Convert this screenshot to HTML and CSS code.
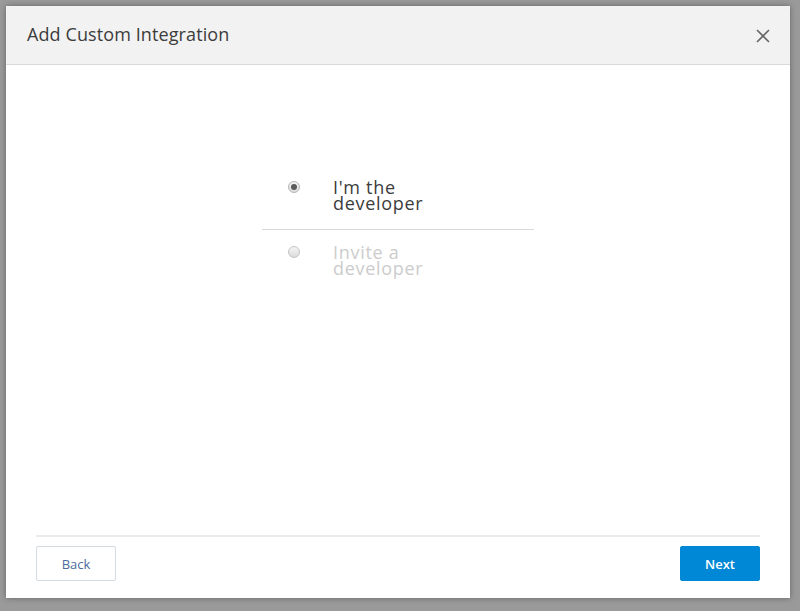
FILE: index.html
```html
<!DOCTYPE html>
<html>
<head>
<meta charset="utf-8">
<link rel="stylesheet" href="styles.css">
</head>
<body>
<div class="dialog">
  <div class="header">
    <div class="title">Add Custom Integration</div>
    <svg class="close" width="14" height="14" viewBox="0 0 14 14"><path d="M1 1L13 13M13 1L1 13" stroke="#666" stroke-width="1.6" fill="none"/></svg>
  </div>
  <div class="content">
    <div class="options">
      <div class="option selected">
        <span class="radio"><span class="dot"></span></span>
        <span class="label">I'm the developer</span>
      </div>
      <div class="option disabled">
        <span class="radio"></span>
        <span class="label">Invite a developer</span>
      </div>
    </div>
  </div>
  <div class="footer">
    <button class="btn back">Back</button>
    <button class="btn next">Next</button>
  </div>
</div>
</body>
</html>
```
FILE: styles.css
```css
html, body { margin: 0; height: 100%; }
body {
  background: #9a9a9a;
  padding: 6px 10px 13px 6px;
  box-sizing: border-box;
  font-family: "Open Sans", "Noto Sans", sans-serif;
}
.dialog {
  width: 784px;
  height: 592px;
  background: #fff;
  box-shadow: 0 0 6px rgba(0,0,0,0.35);
  display: flex;
  flex-direction: column;
}
.header {
  height: 58px;
  background: #f2f2f2;
  border-bottom: 1px solid #d9d9d9;
  display: flex;
  align-items: center;
  justify-content: space-between;
  padding: 0 20px 0 21px;
  flex-shrink: 0;
}
.title {
  font-size: 18px;
  color: #3c3c3c;
  letter-spacing: 0.1px;
  margin-top: -2px;
}
.close { display: block; margin-top: 1px; }
.content {
  flex: 1;
  display: flex;
  justify-content: center;
}
.options {
  width: 272px;
  margin-top: 98px;
}
.option {
  display: flex;
  align-items: flex-start;
  padding: 16px 0 18px 26px;
}
.option + .option {
  border-top: 1px solid #d9d9d9;
  padding-top: 14px;
}
.radio {
  width: 12px;
  height: 12px;
  border-radius: 50%;
  box-sizing: border-box;
  border: 1px solid #b5b5b5;
  background: linear-gradient(#f4f4f4, #dcdcdc);
  margin-top: 2px;
  margin-right: 33px;
  display: flex;
  align-items: center;
  justify-content: center;
  flex-shrink: 0;
}
.dot {
  width: 6px;
  height: 6px;
  border-radius: 50%;
  background: #5a5a5a;
}
.label {
  width: 110px;
  font-size: 18px;
  line-height: 16px;
  letter-spacing: 0.7px;
  color: #3c3c3c;
}
.disabled .label { color: #cccccc; }
.disabled .radio { border-color: #c4c4c4; }
.footer {
  margin: 0 30px;
  border-top: 2px solid #ebebeb;
  padding: 9px 0 17px;
  display: flex;
  justify-content: space-between;
}
.btn {
  width: 80px;
  height: 35px;
  font-family: "Open Sans", "Noto Sans", sans-serif;
  font-size: 13px;
  border-radius: 2px;
  cursor: pointer;
}
.back {
  background: #fff;
  border: 1px solid #d5dbe3;
  color: #4b6b9d;
}
.next {
  background: #0087d5;
  border: 1px solid #0087d5;
  color: #fff;
  font-weight: 600;
}
```
